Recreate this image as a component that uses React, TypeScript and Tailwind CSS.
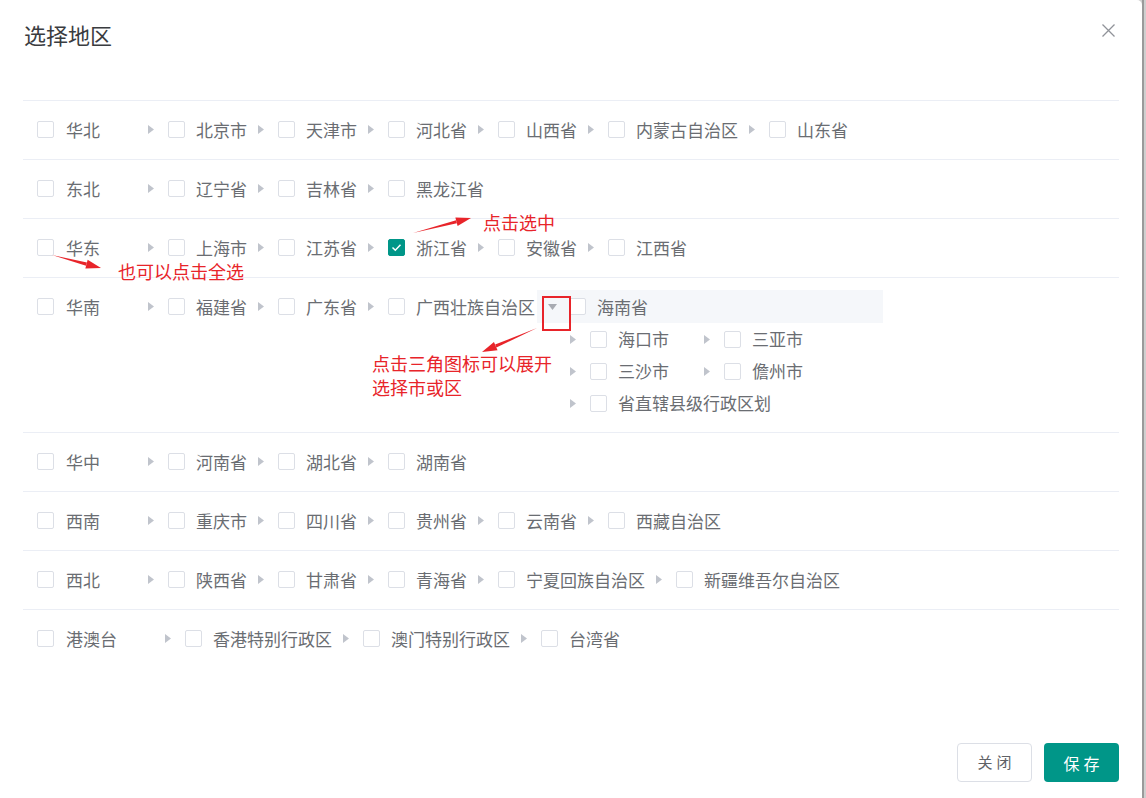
import React from 'react';

type Region = { name: string; items: string[] };

const regions: Region[] = [
  { name: '华北', items: ['北京市', '天津市', '河北省', '山西省', '内蒙古自治区', '山东省'] },
  { name: '东北', items: ['辽宁省', '吉林省', '黑龙江省'] },
  { name: '华东', items: ['上海市', '江苏省', '浙江省', '安徽省', '江西省'] },
  { name: '华南', items: ['福建省', '广东省', '广西壮族自治区'] },
  { name: '华中', items: ['河南省', '湖北省', '湖南省'] },
  { name: '西南', items: ['重庆市', '四川省', '贵州省', '云南省', '西藏自治区'] },
  { name: '西北', items: ['陕西省', '甘肃省', '青海省', '宁夏回族自治区', '新疆维吾尔自治区'] },
  { name: '港澳台', items: ['香港特别行政区', '澳门特别行政区', '台湾省'] },
];

const hainanCities = ['海口市', '三亚市', '三沙市', '儋州市', '省直辖县级行政区划'];

const Checkbox: React.FC<{ checked?: boolean }> = ({ checked }) => (
  <span
    className={
      checked
        ? 'w-[17px] h-[17px] rounded-[2px] bg-[#009688] border border-[#009688] flex items-center justify-center shrink-0'
        : 'w-[17px] h-[17px] rounded-[2px] bg-white border border-[#dcdfe6] shrink-0'
    }
  >
    {checked && (
      <svg width="11" height="9" viewBox="0 0 11 9">
        <path d="M1.5 4.5 L4.3 7.2 L9.5 1.8" fill="none" stroke="#fff" strokeWidth="1.5" />
      </svg>
    )}
  </span>
);

const Caret: React.FC = () => (
  <svg width="6" height="9" viewBox="0 0 6 9" className="shrink-0">
    <polygon points="0,0 6,4.5 0,9" fill="#c0c4cc" />
  </svg>
);

const Node: React.FC<{ label: string; checked?: boolean; wide?: boolean }> = ({ label, checked, wide }) => (
  <div className={wide ? 'flex items-center h-[32px] min-w-[134px]' : 'flex items-center h-[33px]'}>
    <span className="ml-[11px] mr-[14px] flex">
      <Caret />
    </span>
    <Checkbox checked={checked} />
    <span className="ml-[11px] whitespace-nowrap">{label}</span>
  </div>
);

const arrowPoints = (x1: number, y1: number, x2: number, y2: number) => {
  const dx = x2 - x1;
  const dy = y2 - y1;
  const len = Math.sqrt(dx * dx + dy * dy);
  const ux = dx / len;
  const uy = dy / len;
  const nx = -uy;
  const ny = ux;
  const bx = x2 - ux * 15;
  const by = y2 - uy * 15;
  return {
    head: `${x2},${y2} ${bx + nx * 4.5},${by + ny * 4.5} ${bx - nx * 4.5},${by - ny * 4.5}`,
    tail: `${x1},${y1} ${bx + nx * 1.6},${by + ny * 1.6} ${bx - nx * 1.6},${by - ny * 1.6}`,
  };
};

const arrows = [
  arrowPoints(413, 233, 471, 218),
  arrowPoints(52, 255, 101, 268),
  arrowPoints(537, 328, 482, 352),
];

const App: React.FC = () => {
  return (
    <div className="w-[1146px] h-[798px] flex bg-[#cfcfcf] overflow-hidden font-['Noto_Sans_CJK_SC','Noto_Sans',sans-serif]">
      <div className="relative w-[1142px] h-[798px] bg-white rounded-tr-[5px] flex flex-col shrink-0">
        <header className="h-[100px] flex justify-between items-start pl-[24px] pr-[27px]">
          <h1 className="pt-[21px] text-[22px] leading-[26px] text-[#3a3c40] font-normal">选择地区</h1>
          <svg width="13" height="13" viewBox="0 0 13 13" className="mt-[24px]">
            <path d="M0.5 0.5 L12.5 12.5 M12.5 0.5 L0.5 12.5" stroke="#909399" strokeWidth="1.3" />
          </svg>
        </header>

        <div className="mx-[23px] text-[17px] text-[#6a6d72]">
          {regions.map((region) => (
            <div key={region.name} className="flex items-start border-t border-[#ebeef5] pt-[12px] pb-[13px] pl-[14px]">
              <div className="flex items-center h-[33px]">
                <Checkbox />
                <span className="ml-[12px] mr-[37px] whitespace-nowrap">{region.name}</span>
              </div>
              {region.items.map((item) => (
                <Node key={item} label={item} checked={item === '浙江省'} />
              ))}
              {region.name === '华南' && (
                <div className="ml-[2px] w-[346px]">
                  <div className="flex items-center h-[33px] bg-[#f5f7fa] pl-[11px]">
                    <svg width="9" height="6" viewBox="0 0 9 6" className="mr-[12px]">
                      <polygon points="0,0 9,0 4.5,6" fill="#a8abb2" />
                    </svg>
                    <Checkbox />
                    <span className="ml-[11px]">海南省</span>
                  </div>
                  <div className="flex flex-wrap pl-[22px]">
                    {hainanCities.map((c) => (
                      <Node key={c} label={c} wide />
                    ))}
                  </div>
                </div>
              )}
            </div>
          ))}
        </div>

        <footer className="mt-auto flex justify-end gap-[12px] px-[23px] pb-[16px]">
          <button className="w-[75px] h-[39px] rounded-[4px] border border-[#dcdfe6] bg-white text-[15px] text-[#606266] tracking-[4px] pl-[4px]">
            关闭
          </button>
          <button className="w-[75px] h-[39px] rounded-[4px] bg-[#009688] text-[16px] text-white tracking-[4px] pl-[4px]">
            保存
          </button>
        </footer>

        {/* annotations */}
        <svg className="absolute inset-0 pointer-events-none" width="1142" height="798">
          {arrows.map((a, i) => (
            <g key={i}>
              <polygon points={a.tail} fill="#e8242a" />
              <polygon points={a.head} fill="#e8242a" />
            </g>
          ))}
        </svg>
        <div className="absolute left-[542px] top-[296px] w-[29px] h-[35px] border-2 border-[#e8242a]" />
        <div className="absolute left-[483px] top-[210px] text-[18px] leading-[24px] text-[#e8242a]">点击选中</div>
        <div className="absolute left-[118px] top-[259px] text-[18px] leading-[24px] text-[#e8242a]">也可以点击全选</div>
        <div className="absolute left-[372px] top-[351px] text-[18px] leading-[24px] text-[#e8242a]">
          点击三角图标可以展开
          <br />
          选择市或区
        </div>
      </div>
      <div className="w-[2px] h-full bg-[#9a9a9a] shrink-0" />
    </div>
  );
};

export default App;
